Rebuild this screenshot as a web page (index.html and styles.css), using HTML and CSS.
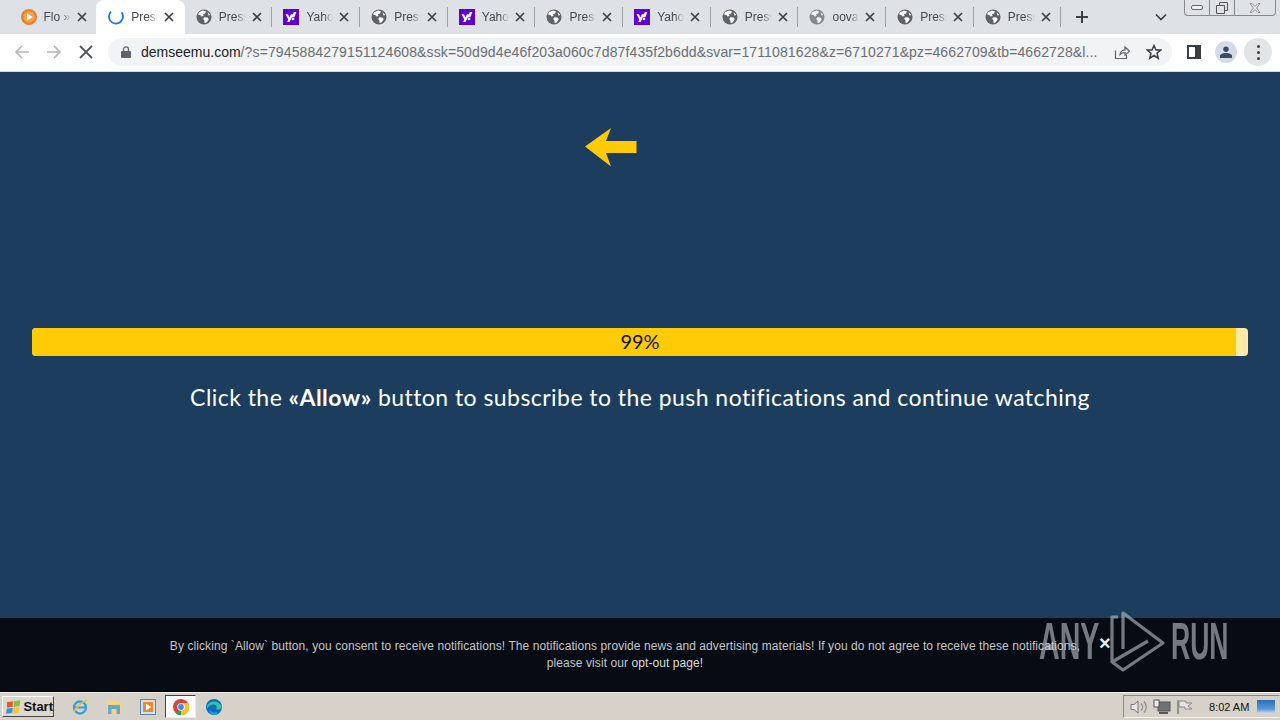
FILE: index.html
```html
<!DOCTYPE html>
<html lang="en">
<head>
<meta charset="utf-8">
<title>demseemu.com</title>
<link rel="stylesheet" href="styles.css">
</head>
<body>
<svg class="defs" width="0" height="0" aria-hidden="true">
  <symbol id="globe" viewBox="0 0 16 16">
    <circle cx="8" cy="8" r="7.5" fill="#5f6368"/>
    <path d="M3 3.2 7 1.6 10 2.6 9 4.6 7 5.2 7.6 7 5.4 7.6 4.4 6 2 5.4ZM8.2 8.2 11.6 8.6 12.8 10.2 10.6 13.4 8.6 14 8.4 11.4 7.2 10Z" fill="#fff"/>
    <path d="M11.5 3.2 14.4 6 12.6 6.4Z" fill="#fff"/>
  </symbol>
  <symbol id="yahoo" viewBox="0 0 16 16">
    <rect width="16" height="16" fill="#5f01d1"/>
    <path d="M2.5 5.2H5L6.4 8.6 7.9 5.2H10.3L6.6 13H4.2L5.3 10.6ZM10.8 3H13.4L11.3 8.2H9Z" fill="#fff"/>
    <circle cx="10" cy="10" r="1.3" fill="#fff"/>
  </symbol>
  <symbol id="close" viewBox="0 0 10 10">
    <path d="M1 1 9 9M9 1 1 9" fill="none" stroke="#3c4043" stroke-width="1.7"/>
  </symbol>
</svg>

<header class="tabstrip">
  <div class="tabs">
    <div class="tab">
      <svg class="favicon" viewBox="0 0 16 16"><circle cx="8" cy="8" r="8" fill="#e8822c"/><circle cx="8" cy="8" r="5.6" fill="#f6a34f"/><path d="M6 4.6 11.6 8 6 11.4Z" fill="#fff"/></svg>
      <span class="tab-title">Flo »</span>
      <svg class="tab-close"><use href="#close"/></svg>
    </div>
    <div class="tab tab-active">
      <svg class="favicon" viewBox="0 0 16 16"><path d="M3 2.6A7 7 0 1 0 13.6 3.4" fill="none" stroke="#1a73e8" stroke-width="1.8"/></svg>
      <span class="tab-title">Press</span>
      <svg class="tab-close"><use href="#close"/></svg>
    </div>
    <div class="tab tab-sep"><svg class="favicon"><use href="#globe"/></svg><span class="tab-title">Press</span><svg class="tab-close"><use href="#close"/></svg></div>
    <div class="tab tab-sep"><svg class="favicon"><use href="#yahoo"/></svg><span class="tab-title">Yaho</span><svg class="tab-close"><use href="#close"/></svg></div>
    <div class="tab tab-sep"><svg class="favicon"><use href="#globe"/></svg><span class="tab-title">Press</span><svg class="tab-close"><use href="#close"/></svg></div>
    <div class="tab tab-sep"><svg class="favicon"><use href="#yahoo"/></svg><span class="tab-title">Yaho</span><svg class="tab-close"><use href="#close"/></svg></div>
    <div class="tab tab-sep"><svg class="favicon"><use href="#globe"/></svg><span class="tab-title">Press</span><svg class="tab-close"><use href="#close"/></svg></div>
    <div class="tab tab-sep"><svg class="favicon"><use href="#yahoo"/></svg><span class="tab-title">Yaho</span><svg class="tab-close"><use href="#close"/></svg></div>
    <div class="tab tab-sep"><svg class="favicon"><use href="#globe"/></svg><span class="tab-title">Press</span><svg class="tab-close"><use href="#close"/></svg></div>
    <div class="tab tab-sep"><svg class="favicon favicon-dim"><use href="#globe"/></svg><span class="tab-title">oova</span><svg class="tab-close"><use href="#close"/></svg></div>
    <div class="tab tab-sep"><svg class="favicon"><use href="#globe"/></svg><span class="tab-title">Press</span><svg class="tab-close"><use href="#close"/></svg></div>
    <div class="tab tab-sep"><svg class="favicon"><use href="#globe"/></svg><span class="tab-title">Press</span><svg class="tab-close"><use href="#close"/></svg></div>
  </div>
  <svg class="new-tab" viewBox="0 0 12 12"><path d="M6 0V12M0 6H12" stroke="#3c4043" stroke-width="2"/></svg>
  <svg class="tab-menu" viewBox="0 0 12 8"><path d="M1 1.5 6 6.5 11 1.5" fill="none" stroke="#3c4043" stroke-width="1.7"/></svg>
  <div class="win-controls">
    <div class="win-btn win-min"><svg viewBox="0 0 12 6" width="12" height="6"><rect x="0.5" y="0.5" width="11" height="4" rx="1.5" fill="#f0f0f0" stroke="#666"/></svg></div>
    <div class="win-btn win-max"><svg viewBox="0 0 12 12" width="12" height="12"><path d="M3.5 3V.5H11.500V8.500H9M.5 3.500H8.500V11.500H.5Z" fill="none" stroke="#555"/></svg></div>
    <div class="win-btn win-x"><svg viewBox="0 0 12 10" width="12" height="10"><path d="M1 .5H3L6 3.500 9 .5H11L7.500 5 11 9.500H9L6 6.500 3 9.500H1L4.500 5Z" fill="#eee" stroke="#777" stroke-width=".8"/></svg></div>
  </div>
</header>

<nav class="toolbar">
  <svg class="nav-ico" viewBox="0 0 16 16"><path d="M15 8H2M8 2 2 8 8 14" fill="none" stroke="#b4b7bb" stroke-width="1.700"/></svg>
  <svg class="nav-ico" viewBox="0 0 16 16"><path d="M1 8H14M8 2 14 8 8 14" fill="none" stroke="#b4b7bb" stroke-width="1.700"/></svg>
  <svg class="nav-ico nav-stop" viewBox="0 0 14 14"><path d="M1 1 13 13M13 1 1 13" fill="none" stroke="#54585c" stroke-width="1.800"/></svg>
  <div class="omnibox">
    <svg class="lock" viewBox="0 0 10 12"><path d="M2.500 5V3.400a2.500 2.500 0 0 1 5 0V5" fill="none" stroke="#5f6368" stroke-width="1.300"/><rect y="5" width="10" height="7" rx="1" fill="#5f6368"/></svg>
    <span class="url"><span class="url-host">demseemu.com</span><span class="url-rest">/?s=7945884279151124608&amp;ssk=50d9d4e46f203a060c7d87f435f2b6dd&amp;svar=1711081628&amp;z=6710271&amp;pz=4662709&amp;tb=4662728&amp;l...</span></span>
    <svg class="omni-ico" viewBox="0 0 16 16"><path d="M1.500 6.500V14.500H12.500V11M6 10.500C6.500 7.500 9 5.800 11 5.800V3L15.500 7.200 11 11.200V8.500C9 8.500 7.500 9 6 10.500Z" fill="none" stroke="#5f6368" stroke-width="1.200"/></svg>
    <svg class="omni-ico omni-star" viewBox="0 0 16 16"><path d="M8 1.500 10 6H14.800L11 9.200 12.300 14.300 8 11.500 3.700 14.300 5 9.200 1.200 6H6Z" fill="none" stroke="#3c4043" stroke-width="1.500"/></svg>
  </div>
  <svg class="side-ico" viewBox="0 0 14 14"><rect x="1" y="1" width="12" height="12" fill="#fff" stroke="#3c4043" stroke-width="2"/><rect x="8" y="1" width="5" height="12" fill="#3c4043"/></svg>
  <div class="avatar"><svg viewBox="0 0 12 12" width="12" height="12"><circle cx="6" cy="3.200" r="2.700" fill="#3c4a66"/><path d="M0 12V10C0 8 3 7 6 7S12 8 12 10V12Z" fill="#3c4a66"/></svg></div>
  <div class="kebab"><i></i><i></i><i></i></div>
</nav>

<main class="page">
  <svg class="arrow" viewBox="0 0 52 39"><path d="M0 18.500 26 0 21 13H51.500V25H21L26 38.500Z" fill="#ffcb05"/></svg>
  <div class="progress">
    <div class="progress-fill"></div>
    <span class="progress-label">99%</span>
  </div>
  <p class="prompt">Click the <b>«Allow»</b> button to subscribe to the push notifications and continue watching</p>
</main>

<aside class="notice">
  <p class="notice-text">By clicking `Allow` button, you consent to receive notifications! The notifications provide news and advertising materials! If you do not agree to receive these notifications,<br>please visit our <span class="notice-link">opt-out page!</span></p>
  <span class="notice-close">×</span>
</aside>

<footer class="taskbar">
  <div class="start">
    <svg viewBox="0 0 16 14" width="16" height="14"><path d="M1 2 7 1 7 7 1 7.500Z" fill="#e8562a"/><path d="M8 1 15 0 14 6 8 7Z" fill="#8fbe3c"/><path d="M1 8.500 7 8 6.500 13 0 14Z" fill="#3d8ed8"/><path d="M8 8 14 7 13 13 7.500 13.500Z" fill="#f3c62f"/></svg>
    <span>Start</span>
  </div>
  <div class="quick">
    <svg class="qi" viewBox="0 0 16 16"><circle cx="8" cy="8.500" r="6" fill="none" stroke="#3f9bd8" stroke-width="2.400"/><path d="M3 8.500H13" stroke="#3f9bd8" stroke-width="2"/><path d="M2 13C5 7 10 3 15 1" fill="none" stroke="#e8c23c" stroke-width="1.400"/></svg>
    <svg class="qi" viewBox="0 0 16 16"><path d="M1 1H8V3H15V15H1Z" fill="#f0d58a"/><path d="M2 6H14V15H10.500V10H5.500V15H2Z" fill="#6da7c8"/></svg>
    <svg class="qi" viewBox="0 0 16 16"><rect x=".5" y=".5" width="15" height="15" fill="#cfe0ee" stroke="#5b87a8"/><rect x="3" y="3" width="10" height="10" fill="#ee8a2a"/><path d="M6 4.500 11 8 6 11.500Z" fill="#fff"/></svg>
    <div class="qi-active">
      <svg class="qi" viewBox="0 0 16 16"><circle cx="8" cy="8" r="8" fill="#db4437"/><path d="M8 8 15 12A8 8 0 0 1 3 14.500Z" fill="#2f9e4f"/><path d="M8 4H15.500A8 8 0 0 1 8 16Z" fill="#fbc02d"/><circle cx="8" cy="8" r="3.800" fill="#fff"/><circle cx="8" cy="8" r="2.900" fill="#4285f4"/></svg>
    </div>
    <svg class="qi" viewBox="0 0 16 16"><circle cx="8" cy="8" r="8" fill="#0f6cbd"/><path d="M1 7C3 1 13 1 15.500 7 16 10 13 11 10 10.500 12 8 10 5.500 7.500 5.500 4 5.500 1.500 8 1 10Z" fill="#35c1a5"/><path d="M10 15.500C6 17 3 14 3.500 10.500 5 13 8 14 12 13Z" fill="#1da0e0"/></svg>
  </div>
  <div class="tray">
    <svg class="ti" viewBox="0 0 18 16"><path d="M1 5.500H4L8 2V14L4 10.500H1Z" fill="#e8e6e0" stroke="#777"/><path d="M11 4.500C13 6.500 13 9.500 11 11.500M14 2.500C17 5.500 17 10.500 14 13.500" fill="none" stroke="#888" stroke-width="1.200"/></svg>
    <svg class="ti" viewBox="0 0 18 16"><rect x="5" y="3" width="12" height="9" fill="#6f7377" stroke="#555"/><rect x="1" y="1" width="5" height="7" fill="#eee" stroke="#555"/><path d="M6 14H15" stroke="#555" stroke-width="2"/></svg>
    <svg class="ti" viewBox="0 0 18 16"><path d="M2 1V15" stroke="#777" stroke-width="1.400"/><path d="M3 2H10L10 4H16L12 7 16 10H9V8H3Z" fill="#e6e4de" stroke="#888"/></svg>
    <span class="clock">8:02 AM</span>
    <div class="show-desktop"></div>
  </div>
</footer>

<div class="watermark">
  <span class="wm-text wm-any">ANY</span>
  <svg class="wm-logo" viewBox="0 0 56 62"><path d="M8 7H2V52L38 31M13 39V3L53 33 13 60 2 52" fill="none" stroke-width="3.200" stroke-linejoin="round"/></svg>
  <span class="wm-text wm-run">RUN</span>
</div>
</body>
</html>
```
FILE: styles.css
```css
* { box-sizing: border-box; }
html, body { height: 100%; }
body {
  margin: 0;
  width: 1280px;
  height: 720px;
  overflow: hidden;
  display: flex;
  flex-direction: column;
  position: relative;
  font-family: "Liberation Sans", Arial, sans-serif;
  background: #1c3d5e;
}
.defs { position: absolute; }

/* Tab strip */
.tabstrip {
  height: 34px;
  flex: none;
  background: #dee1e6;
  display: flex;
  align-items: center;
  padding-left: 8.5px;
}
.tabs {
  width: 1052px;
  height: 34px;
  flex: none;
  display: grid;
  grid-template-columns: repeat(12, 1fr);
}
.tab {
  display: flex;
  align-items: center;
  padding: 0 10px 0 12px;
  min-width: 0;
}
.tab-sep { position: relative; }
.tab-sep::after {
  content: "";
  position: absolute;
  right: -1px;
  top: 7px;
  height: 20px;
  width: 1px;
  background: #9aa0a6;
}
.tab-active {
  background: #fff;
  border-radius: 8px 8px 0 0;
  margin-right: -1px;
}
.favicon { width: 16px; height: 16px; flex: none; }
.favicon-dim { opacity: .7; }
.tab-title {
  margin-left: 7px;
  width: 27px;
  flex: none;
  overflow: hidden;
  white-space: nowrap;
  font-size: 12px;
  color: #45494e;
  -webkit-mask-image: linear-gradient(90deg, #000 65%, transparent 100%);
  mask-image: linear-gradient(90deg, #000 65%, transparent 100%);
}
.tab-close { width: 10px; height: 10px; margin-left: 6px; flex: none; }
.new-tab { width: 12px; height: 12px; margin-left: 15.500px; flex: none; }
.tab-menu { width: 12px; height: 8px; margin-left: 67px; flex: none; }
.win-controls {
  margin-left: 17px;
  align-self: flex-start;
  width: 92px;
  height: 16px;
  display: flex;
  border: 1px solid #85898e;
  border-top: 0;
  border-radius: 0 0 4px 4px;
  background: #dfe2e7;
}
.win-btn { display: flex; align-items: center; justify-content: center; }
.win-min { width: 25px; border-right: 1px solid #85898e; }
.win-max { width: 25px; border-right: 1px solid #85898e; }
.win-x { flex: 1; }

/* Toolbar */
.toolbar {
  height: 38px;
  flex: none;
  background: #fff;
  border-bottom: 1px solid #d5d8dc;
  display: flex;
  align-items: center;
  padding: 0 0 1px 14px;
}
.nav-ico { width: 16px; height: 16px; flex: none; margin-right: 16px; }
.nav-stop { width: 14px; height: 14px; margin: 0 15px 0 1px; }
.omnibox {
  width: 1064px;
  height: 28px;
  background: #f1f3f4;
  border-radius: 14px;
  display: flex;
  align-items: center;
  padding-left: 13px;
}
.lock { width: 10px; height: 12px; flex: none; }
.url {
  margin-left: 10px;
  width: 956px;
  flex: none;
  white-space: nowrap;
  overflow: hidden;
  font-size: 14px;
  color: #6a6e73;
}
.url-host { color: #202124; }
.url-rest { letter-spacing: .12px; }
.omni-ico { width: 16px; height: 16px; margin-left: 17px; flex: none; }
.omni-star { margin-left: 16px; }
.side-ico { width: 14px; height: 14px; margin-left: 15px; flex: none; }
.avatar {
  width: 22px;
  height: 22px;
  margin-left: 14px;
  border-radius: 50%;
  background: #d3dbe8;
  display: flex;
  align-items: center;
  justify-content: center;
  flex: none;
}
.kebab {
  width: 28px;
  height: 28px;
  margin-left: 7px;
  border-radius: 50%;
  background: #e3e4e6;
  display: flex;
  flex-direction: column;
  align-items: center;
  justify-content: center;
  gap: 3px;
  flex: none;
}
.kebab i { width: 3px; height: 3px; border-radius: 50%; background: #3c4043; }

/* Page */
.page {
  flex: 1;
  min-height: 0;
  background: #1c3d5e;
  display: flex;
  flex-direction: column;
  align-items: center;
  padding: 56px 32px 0;
}
.arrow { width: 52px; height: 39px; margin-right: 58px; flex: none; }
.progress {
  margin-top: 161px;
  width: 100%;
  height: 28px;
  flex: none;
  position: relative;
  background: #ffeaa6;
  border-radius: 4px;
  overflow: hidden;
  display: flex;
  align-items: center;
  justify-content: center;
}
.progress-fill {
  position: absolute;
  left: 0;
  top: 0;
  bottom: 0;
  width: 99%;
  background: #ffcb05;
}
.progress-label {
  position: relative;
  top: -1px;
  font-family: "Lato", sans-serif;
  font-size: 20px;
  line-height: 28px;
  color: #111;
}
.prompt {
  margin: 28px 0 0;
  font-family: "Lato", sans-serif;
  font-size: 23px;
  line-height: 27px;
  letter-spacing: .45px;
  color: #fff;
  white-space: nowrap;
}

/* Notice */
.notice {
  height: 74px;
  flex: none;
  background: #070c14;
  position: relative;
  padding: 20px 30px 0 0;
  border-bottom: 1px solid #000;
}
.notice-text {
  margin: 0;
  text-align: center;
  font-size: 12px;
  line-height: 17px;
  letter-spacing: .08px;
  color: #c4c6c9;
}
.notice-link { color: #dcdcdc; }
.notice-close {
  position: absolute;
  left: 1099px;
  top: 15px;
  font-size: 20px;
  line-height: 20px;
  font-weight: 700;
  color: #e8e8e8;
}

/* Taskbar */
.taskbar {
  height: 28px;
  flex: none;
  background: #d6d2ca;
  border-top: 1px solid #f4f2ec;
  display: flex;
  align-items: center;
  padding-left: 2px;
}
.start {
  width: 52px;
  height: 21px;
  display: flex;
  align-items: center;
  gap: 2px;
  padding-left: 3px;
  background: #dcd8d0;
  border: 1px solid;
  border-color: #fff #444 #444 #fff;
  font-size: 13px;
  font-weight: 700;
  color: #111;
}
.quick { display: flex; align-items: center; margin-left: 18px; }
.qi { width: 16px; height: 16px; flex: none; margin-right: 18px; }
.qi-active {
  width: 31px;
  height: 23px;
  margin: 0 10px 0 -9px;
  background: #fff;
  border: 1px solid;
  border-color: #444 #eee #eee #444;
  display: flex;
  align-items: center;
  justify-content: center;
}
.qi-active .qi { margin: 0; }
.tray {
  margin-left: auto;
  width: 157px;
  height: 23px;
  display: flex;
  align-items: center;
  padding-left: 6px;
  border: 1px solid;
  border-color: #8d8a84 transparent #f4f2ec #8d8a84;
}
.ti { width: 18px; height: 16px; flex: none; margin-right: 5px; }
.clock { font-size: 11px; color: #111; margin-left: 10px; white-space: nowrap; }
.show-desktop {
  width: 18px;
  height: 13px;
  margin-left: 8px;
  background: linear-gradient(180deg, #2b6fb8, #5a97d6 70%, #c8d8e8);
  flex: none;
}

/* Watermark */
.watermark {
  position: absolute;
  left: 1039px;
  top: 610px;
  display: flex;
  align-items: center;
  height: 62px;
  opacity: .55;
  pointer-events: none;
}
.wm-text {
  font-size: 52px;
  font-weight: 700;
  line-height: 62px;
  color: #cfd3da;
  white-space: nowrap;
  transform-origin: left center;
  display: block;
  flex: none;
}
.wm-any { width: 71px; transform: scaleX(.55); }
.wm-run { width: 62px; margin-left: 5px; transform: scaleX(.51); }
.wm-logo { width: 56px; height: 62px; flex: none; stroke: #cfd3da; }
```
